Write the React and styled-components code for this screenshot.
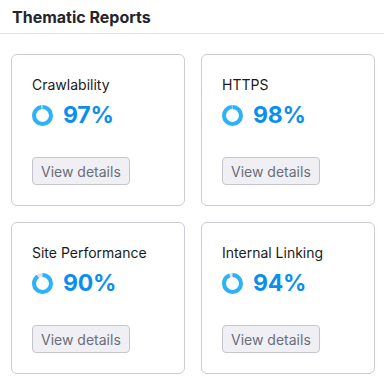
import styled, { createGlobalStyle } from "styled-components";

const GlobalStyle = createGlobalStyle`
  body {
    margin: 0;
    background: #ffffff;
    font-family: Inter, "Noto Sans", sans-serif;
  }
`;

const Header = styled.div`
  height: 33px;
  padding: 0 12px;
  display: flex;
  align-items: center;
  border-bottom: 1px solid #e2e3e8;
  font-size: 16px;
  font-weight: 700;
  color: #24252b;
`;

const Grid = styled.div`
  display: grid;
  grid-template-columns: 174px 174px;
  gap: 16px;
  padding: 20px 11px 0;
`;

const Card = styled.div`
  border: 1px solid #cbccd4;
  border-radius: 6px;
  padding: 20px;
  display: flex;
  flex-direction: column;
  align-items: flex-start;
`;

const CardTitle = styled.div`
  font-size: 14px;
  line-height: 20px;
  color: #1a1b21;
`;

const ScoreRow = styled.div`
  display: flex;
  align-items: center;
  gap: 10px;
  margin-top: 6px;
  height: 28px;
`;

const Score = styled.span`
  font-size: 23px;
  font-weight: 700;
  line-height: 28px;
  letter-spacing: -0.2px;
  color: #0a8ef2;
`;

const DetailsButton = styled.button`
  margin-top: 28px;
  height: 28px;
  padding: 0 8px;
  border: 1px solid #c4c5cd;
  border-radius: 4px;
  background: #f0f0f4;
  color: #6b6d78;
  font-family: inherit;
  font-size: 14px;
  cursor: pointer;
`;

function Donut({ value }) {
  const r = 8.5;
  const c = 2 * Math.PI * r;
  return (
    <svg width="21" height="21" viewBox="0 0 21 21">
      <circle cx="10.5" cy="10.5" r={r} fill="none" stroke="#e1e2e8" strokeWidth="4" />
      <circle
        cx="10.5"
        cy="10.5"
        r={r}
        fill="none"
        stroke="#2cb2f8"
        strokeWidth="4"
        strokeDasharray={`${(c * value) / 100} ${c}`}
        transform="rotate(-90 10.5 10.5)"
      />
    </svg>
  );
}

const reports = [
  { name: "Crawlability", value: 97 },
  { name: "HTTPS", value: 98 },
  { name: "Site Performance", value: 90 },
  { name: "Internal Linking", value: 94 },
];

export default function App() {
  return (
    <>
      <GlobalStyle />
      <Header>Thematic Reports</Header>
      <Grid>
        {reports.map((r) => (
          <Card key={r.name}>
            <CardTitle>{r.name}</CardTitle>
            <ScoreRow>
              <Donut value={r.value} />
              <Score>{r.value}%</Score>
            </ScoreRow>
            <DetailsButton>View details</DetailsButton>
          </Card>
        ))}
      </Grid>
    </>
  );
}
